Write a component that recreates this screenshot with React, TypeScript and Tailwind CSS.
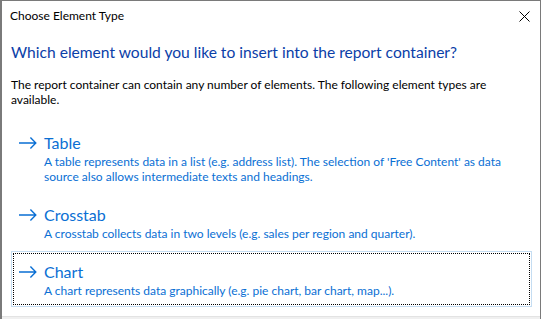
import React from "react";

function Arrow() {
  return (
    <svg width="18" height="12" viewBox="0 0 18 12" className="shrink-0">
      <path d="M0 6 H16.8 M11.4 0.6 L16.8 6 L11.4 11.4" fill="none" stroke="#0a6fd4" strokeWidth="1.4" />
    </svg>
  );
}

function CommandLink({ title, lines, focused }: { title: string; lines: string[]; focused?: boolean }) {
  return (
    <div className={focused ? "border border-[#c5ddf2] p-px" : "border border-transparent p-px"}>
      <div className={focused ? "border border-dotted border-black pl-[5px] pt-[7px] pb-[6px]" : "border border-transparent pl-[5px] pt-[7px] pb-[6px]"}>
        <div className="flex items-center h-[22px]">
          <Arrow />
          <span className="ml-[7px] text-[16px] leading-[22px] text-[#0a6fd4]">{title}</span>
        </div>
        <div className="pl-[25px] text-[12px] leading-[15px] text-[#0a6fd4]">
          {lines.map((l, i) => (
            <div key={i} className="whitespace-nowrap">{l}</div>
          ))}
        </div>
      </div>
    </div>
  );
}

export default function App() {
  return (
    <div className="w-[542px] h-[319px] bg-white overflow-hidden font-['Lato',sans-serif]">
      <div className="w-[541px] h-[319px] border-l-2 border-t border-r border-[#7a7a7a] flex flex-col">
        <div className="h-[30px] flex items-center justify-between pl-[8px] pr-[10px]">
          <span className="text-[12px] leading-[16px] text-black">Choose Element Type</span>
          <svg width="11" height="11" viewBox="0 0 11 11">
            <path d="M0.5 0.5 L10.5 10.5 M10.5 0.5 L0.5 10.5" stroke="#000" strokeWidth="1" fill="none" />
          </svg>
        </div>
        <div className="flex-1 flex flex-col pl-[9px] pr-[8px]">
          <div className="mt-[10px] text-[15.6px] leading-[22px] text-[#0b40a8] whitespace-nowrap">
            Which element would you like to insert into the report container?
          </div>
          <div className="mt-[14px] text-[12px] leading-[15px] text-black">
            <div className="whitespace-nowrap">The report container can contain any number of elements. The following element types are</div>
            <div>available.</div>
          </div>
          <div className="mt-[15px] flex flex-col gap-px">
            <CommandLink
              title="Table"
              lines={[
                "A table represents data in a list (e.g. address list). The selection of 'Free Content' as data",
                "source also allows intermediate texts and headings.",
              ]}
            />
            <CommandLink
              title="Crosstab"
              lines={["A crosstab collects data in two levels (e.g. sales per region and quarter)."]}
            />
            <CommandLink
              title="Chart"
              focused
              lines={["A chart represents data graphically (e.g. pie chart, bar chart, map...)."]}
            />
          </div>
        </div>
        <div className="h-[3px] bg-[#f0f0f0] border-t border-[#e3e3e3]" />
      </div>
    </div>
  );
}
